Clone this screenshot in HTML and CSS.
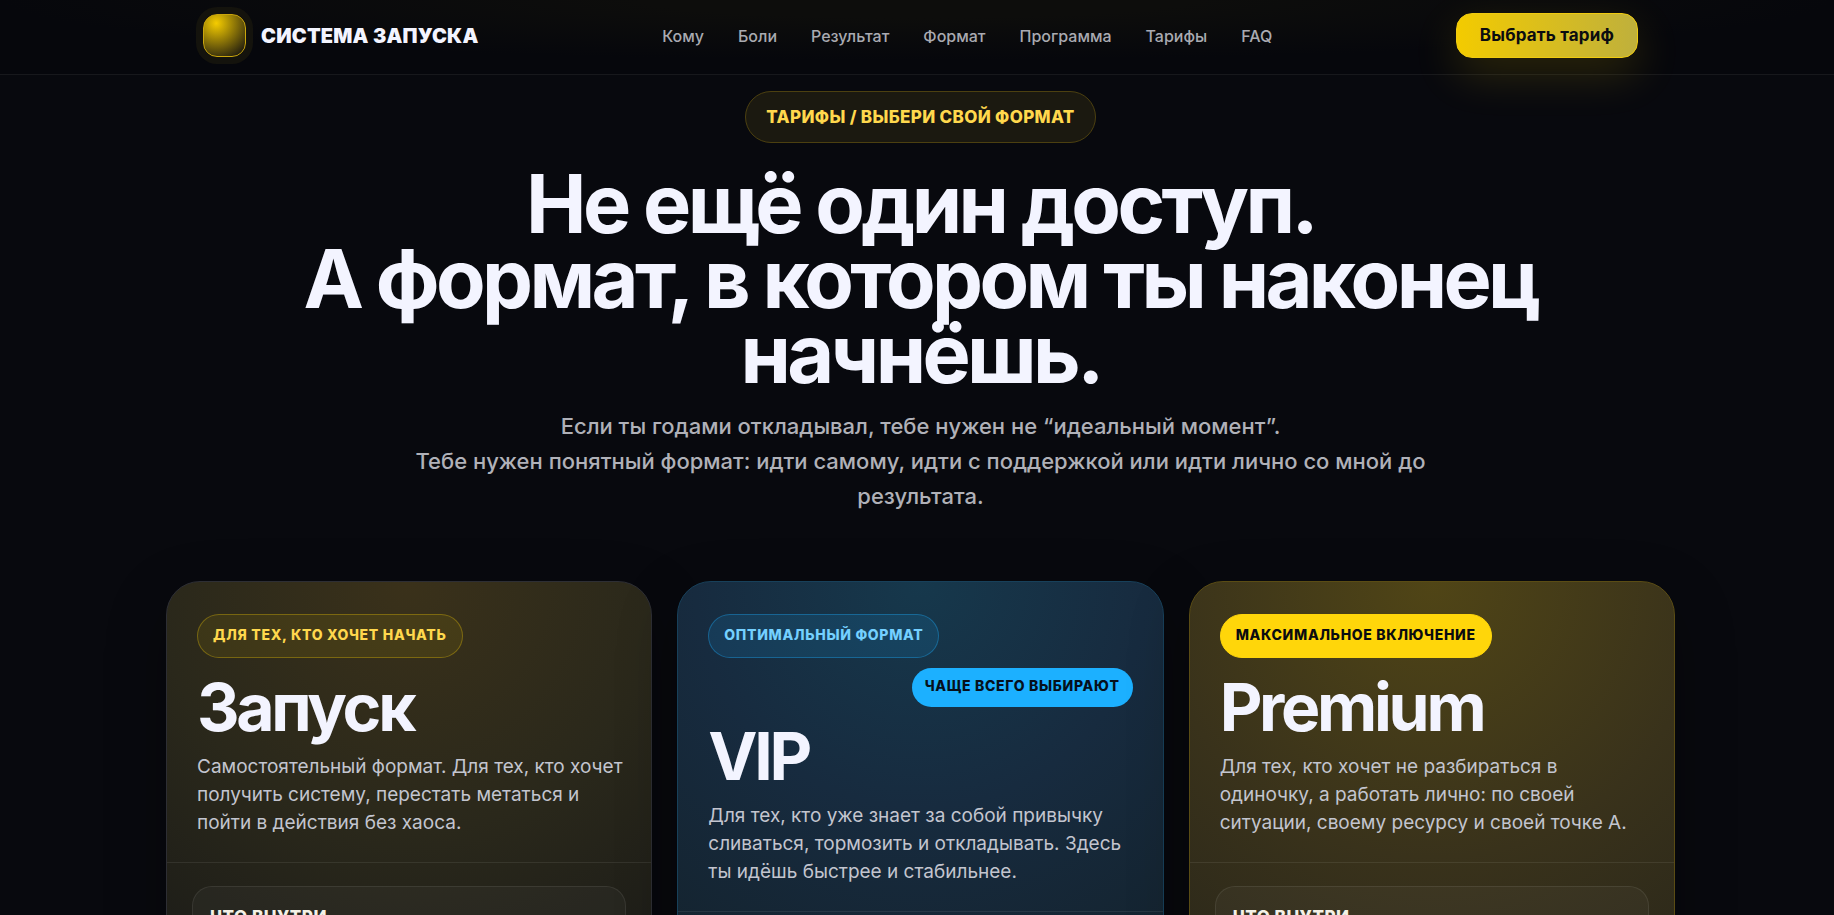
FILE: index.html
```html
<!DOCTYPE html>
<html lang="ru">
<head>
	<meta charset="UTF-8">
	<meta name="viewport" content="width=device-width, initial-scale=1">
	<title>Система запуска</title>
	<link rel="stylesheet" href="styles.css">
</head>
<body>
	<header class="header">
		<div class="header-in">
			<a class="brand" href="#top">
				<span class="logo"></span>
				<span>СИСТЕМА ЗАПУСКА</span>
			</a>
			<nav class="nav">
				<a href="#who">Кому</a>
				<a href="#pains">Боли</a>
				<a href="#result">Результат</a>
				<a href="#format">Формат</a>
				<a href="#program">Программа</a>
				<a href="#pricing">Тарифы</a>
				<a href="#faq">FAQ</a>
			</nav>
			<a class="btn" href="#pricing">Выбрать тариф</a>
		</div>
	</header>

	<main class="pricing" id="pricing">
		<section class="hero">
			<span class="eyebrow">ТАРИФЫ / ВЫБЕРИ СВОЙ ФОРМАТ</span>
			<h1>Не ещё один доступ.<br>А формат, в котором ты наконец начнёшь.</h1>
			<p class="lead">Если ты годами откладывал, тебе нужен не “идеальный момент”.<br>Тебе нужен понятный формат: идти самому, идти с поддержкой или идти лично со мной до результата.</p>
		</section>

		<section class="cards">
			<article class="card card-start">
				<div class="card-top">
					<span class="tag">ДЛЯ ТЕХ, КТО ХОЧЕТ НАЧАТЬ</span>
					<h2>Запуск</h2>
					<p>Самостоятельный формат. Для тех, кто хочет получить систему, перестать метаться и пойти в действия без хаоса.</p>
				</div>
				<div class="card-body">
					<div class="box"><h3>ЧТО ВНУТРИ</h3></div>
				</div>
			</article>

			<article class="card card-vip">
				<div class="card-top">
					<span class="tag">ОПТИМАЛЬНЫЙ ФОРМАТ</span>
					<span class="popular">ЧАЩЕ ВСЕГО ВЫБИРАЮТ</span>
					<h2>VIP</h2>
					<p>Для тех, кто уже знает за собой привычку сливаться, тормозить и откладывать. Здесь ты идёшь быстрее и стабильнее.</p>
				</div>
				<div class="card-body">
					<div class="box"><h3>ЧТО ВНУТРИ</h3></div>
				</div>
			</article>

			<article class="card card-premium">
				<div class="card-top">
					<span class="tag">МАКСИМАЛЬНОЕ ВКЛЮЧЕНИЕ</span>
					<h2>Premium</h2>
					<p>Для тех, кто хочет не разбираться в одиночку, а работать лично: по своей ситуации, своему ресурсу и своей точке А.</p>
				</div>
				<div class="card-body">
					<div class="box"><h3>ЧТО ВНУТРИ</h3></div>
				</div>
			</article>
		</section>
	</main>
</body>
</html>
```

FILE: styles.css
```css
* {
	box-sizing: border-box;
}
body {
	background: #08090e;
	color: #f3f4ff;
	font-family: Inter, "Open Sans", sans-serif;
	height: 100vh;
	margin: 0;
	overflow: hidden;
}
a {
	color: inherit;
	text-decoration: none;
}

/* Header */
.header {
	background: radial-gradient(ellipse 50% 60px at 50% 0, #0d0d0c 30%, #06070c);
	border-bottom: 1px solid #17181c;
	padding: 13px 0 16px 7px;
}
.header-in {
	align-items: center;
	display: flex;
	justify-content: space-between;
	margin: 0 auto;
	max-width: 1435px;
}
.brand {
	align-items: center;
	display: flex;
	font-size: 20px;
	font-weight: 900;
	gap: 15px;
	letter-spacing: 0.01em;
}
.logo {
	background: radial-gradient(circle at 30% 20%, #f5cc00, #1d190f 90%);
	border: 1px solid #c9a50c;
	border-radius: 14px;
	box-shadow: 0 0 0 7px #14130d;
	height: 43px;
	width: 43px;
}
.nav {
	color: #a9aab1;
	display: flex;
	font-size: 16px;
	font-weight: 500;
	gap: 34px;
}
.btn {
	background: linear-gradient(90deg, #f3cb00, #bfb03c);
	border: 1px solid #f0cb10;
	border-radius: 16px;
	box-shadow: 0 16px 45px rgba(255, 212, 0, 0.16);
	color: #0b0c10;
	font-size: 17px;
	font-weight: 700;
	letter-spacing: 0.01em;
	line-height: 21px;
	padding: 11px 23px;
}

/* Hero */
.pricing {
	padding: 16px 0 0 7px;
}
.hero {
	align-items: center;
	display: flex;
	flex-direction: column;
	margin: 0 auto;
	max-width: 1300px;
	text-align: center;
}
.eyebrow {
	background: #1b1910;
	border: 1px solid #4c4010;
	border-radius: 26px;
	color: #ffd84d;
	font-size: 17px;
	font-weight: 800;
	letter-spacing: 0.02em;
	line-height: 20px;
	padding: 15px 20px;
}
h1 {
	font-size: 81px;
	font-weight: 700;
	letter-spacing: -0.045em;
	line-height: 75px;
	margin: 24px 0 17px;
}
.lead {
	color: #b0b1b8;
	font-size: 22px;
	font-weight: 500;
	line-height: 35px;
	margin: 0;
	max-width: 1040px;
}

/* Cards */
.cards {
	display: grid;
	gap: 25px;
	grid-template-columns: repeat(3, 1fr);
	margin: 67px auto 0;
	max-width: 1509px;
}
.card {
	border: 1px solid #2d2e34;
	border-radius: 34px;
	box-shadow: 0 20px 60px rgba(0, 0, 0, 0.3);
}
.card-start {
	background: radial-gradient(circle at 50% 0, #3a311a, #2a281b 50%, #1c1c18 90%);
}
.card-vip {
	background: radial-gradient(circle at 50% 0, #16384c, #172b3f 45%, #14232e 90%);
	border-color: #17405a;
}
.card-premium {
	background: radial-gradient(circle at 50% 0, #504516, #39321b 55%, #2a271a 95%);
	border-color: #5a4c14;
}
.card-top {
	border-bottom: 1px solid rgba(255, 255, 255, 0.08);
	display: flex;
	flex-direction: column;
	padding: 32px 30px 25px;
}
.tag {
	align-self: flex-start;
	background: rgba(255, 212, 0, 0.08);
	border: 1px solid rgba(255, 212, 0, 0.3);
	border-radius: 22px;
	color: #ffd84d;
	font-size: 14px;
	font-weight: 800;
	letter-spacing: 0.05em;
	line-height: 18px;
	padding: 11px 15px 13px;
}
.card-vip .tag {
	background: rgba(28, 176, 255, 0.12);
	border-color: rgba(28, 176, 255, 0.35);
	color: #74d0ff;
}
.card-premium .tag {
	background: #ffd60a;
	border-color: #ffd60a;
	color: #0b0c10;
}
.popular {
	align-self: flex-end;
	background: #1cb0ff;
	border-radius: 20px;
	color: #06101c;
	font-size: 14px;
	font-weight: 800;
	letter-spacing: 0.05em;
	line-height: 18px;
	margin-top: 10px;
	padding: 9px 13px 12px;
}
h2 {
	font-size: 66px;
	font-weight: 700;
	letter-spacing: -0.05em;
	line-height: 66px;
	margin: 16px 0 13px;
}
.card p {
	color: #c3c5cf;
	font-size: 19px;
	line-height: 28px;
	margin: 0 -6px 0 0;
}
.card-body {
	padding: 23px 25px;
}
.box {
	background: rgba(255, 255, 255, 0.03);
	border: 1px solid rgba(255, 255, 255, 0.08);
	border-radius: 20px;
	padding: 19px 17px;
}
h3 {
	color: #f4f1e6;
	font-size: 17px;
	font-weight: 800;
	letter-spacing: 0.03em;
	line-height: 22px;
	margin: 0;
}
```
